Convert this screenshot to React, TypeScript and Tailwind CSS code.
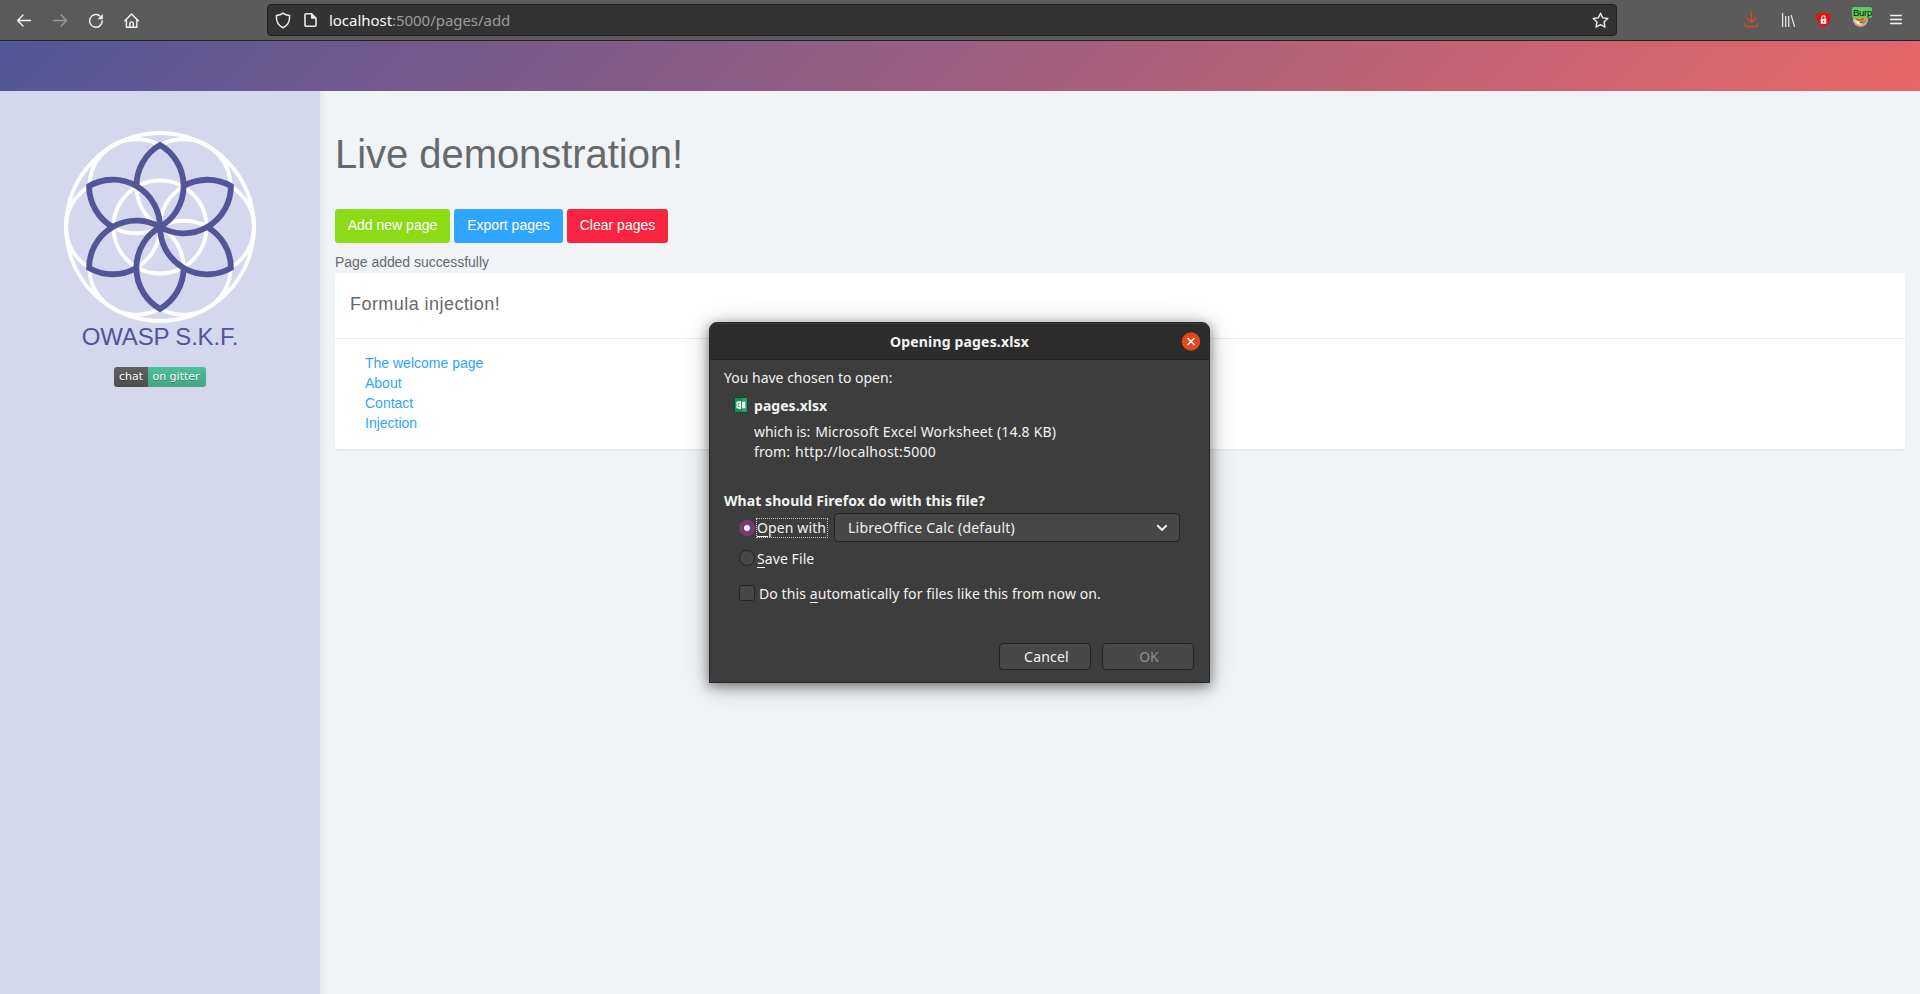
import type { ReactNode } from "react";

const PETALS = [0, 60, 120, 180, 240, 300];
const RINGS: [number, number][] = [
  [47, 0],
  [23.5, 40.7],
  [-23.5, 40.7],
  [-47, 0],
  [-23.5, -40.7],
  [23.5, -40.7],
];

function FlowerLogo() {
  return (
    <svg className="h-[192px] w-[192px]" viewBox="-96 -96 192 192" fill="none">
      <g stroke="#ffffff" strokeWidth="3.9">
        <circle r="94" />
        <circle r="46.500" />
        {RINGS.map(([x, y]) => (
          <circle key={`${x},${y}`} cx={x} cy={y} r="47" />
        ))}
      </g>
      <g stroke="#525596" strokeWidth="5.8" strokeMiterlimit="10">
        {PETALS.map((a) => (
          <path
            key={a}
            transform={`rotate(${a})`}
            d="M-23.6 -40.9A47.3 47.3 0 0 1 0 -81.9A47.3 47.3 0 0 1 0 0"
          />
        ))}
      </g>
    </svg>
  );
}

function Toolbar() {
  return (
    <header className="flex h-[41px] items-start border-b border-[#222222] bg-[#5b5b5b] font-['Noto_Sans',sans-serif]">
      <div className="flex w-[267px] items-center gap-[20px] pt-[13px] pl-[16px]">
        <svg className="size-4" viewBox="0 0 16 16" fill="none" stroke="#f3f3f3" strokeWidth="1.4" strokeLinecap="round" strokeLinejoin="round">
          <path d="M14.600 7.500H1.600M7 2.100L1.600 7.500l5.400 5.400" />
        </svg>
        <svg className="size-4" viewBox="0 0 16 16" fill="none" stroke="#9a9a9a" strokeWidth="1.4" strokeLinecap="round" strokeLinejoin="round">
          <path d="M1.500 7.500h13M9.100 2.100l5.400 5.400-5.400 5.400" />
        </svg>
        <svg className="size-4" viewBox="0 0 16 16" fill="none" stroke="#f3f3f3" strokeWidth="1.5" strokeLinecap="round">
          <path d="M11.600 2.800A6.300 6.300 0 1 0 14.200 8" />
          <path d="M14.800 1v5.200H9.600z" fill="#f3f3f3" stroke="none" />
        </svg>
        <svg className="size-4" viewBox="0 0 16 16" fill="none" stroke="#f3f3f3" strokeWidth="1.4" strokeLinecap="round" strokeLinejoin="round">
          <path d="M0.900 7.700L7.600 1l6.700 6.700M2.400 6.600v7.700h10.400V6.600M5.900 14.200v-3.600a1.700 1.700 0 0 1 3.400 0v3.600" />
        </svg>
      </div>
      <div className="mt-[4px] flex h-[32px] w-[1350px] items-center rounded-[4px] border border-[#202020] bg-[#333333] pl-[7px]">
        <svg className="mr-[13px] h-[17px] w-4" viewBox="0 0 16 17" fill="none" stroke="#ededed" strokeWidth="1.5" strokeLinejoin="round">
          <path d="M8 1.200C6.300 2.600 3.700 3.300 1.400 3.400C1.200 8.400 2.700 13.600 8 15.700C13.300 13.600 14.800 8.400 14.600 3.400C12.300 3.300 9.700 2.600 8 1.200z" />
        </svg>
        <svg className="mr-[12px] h-4 w-[13px]" viewBox="0 0 13 16" fill="none" stroke="#ededed" strokeWidth="1.6" strokeLinejoin="round">
          <path d="M7.600 1.800H2a1 1 0 0 0-1 1v10.400a1 1 0 0 0 1 1h9a1 1 0 0 0 1-1V6.200z" />
          <path d="M7.400 1.800v4.400h4.400z" fill="#ededed" strokeWidth="1" />
        </svg>
        <p className="flex-1 text-[15px] leading-5 tracking-[-0.04px] whitespace-pre text-[#9b9b9b]">
          <span className="text-[#f9f9fa]">localhost</span>:5000/pages/add
        </p>
        <svg className="mr-[7px] h-[17px] w-[17px]" viewBox="0 0 17 17" fill="none" stroke="#ededed" strokeWidth="1.4" strokeLinejoin="round">
          <path d="M8.500 1.200l2.200 4.700 5.100.6-3.800 3.500 1 5.100-4.500-2.500L4 15.100l1-5.100L1.200 6.500l5.100-.6z" />
        </svg>
      </div>
      <div className="flex flex-1 items-start pl-[127px]">
        <svg className="mt-[12px] h-4 w-[15px]" viewBox="0 0 15 16" fill="none" stroke="#d9491a" strokeWidth="1.4" strokeLinecap="round" strokeLinejoin="round">
          <path d="M7.400.8v9.400M3.200 6.200l4.200 4.200 4.200-4.200M1 11.600v1.600a1.300 1.300 0 0 0 1.300 1.300h10.200a1.300 1.300 0 0 0 1.300-1.300v-1.600" />
        </svg>
        <svg className="mt-[13px] ml-[22px] h-[15px] w-[15px]" viewBox="0 0 15 15" fill="none" stroke="#ededed" strokeWidth="1.2">
          <path d="M1.600 0v14M4.700 3v11M7.700 3v11M10.200 2.200l3.400 11.600" />
        </svg>
        <svg className="mt-[12px] ml-[20px] h-4 w-[15px]" viewBox="0 0 15 16">
          <path d="M7.500 0C5.200 1.400 2.800 1.900.5 2c-.4 6 1.600 11.200 7 13.600C12.900 13.200 14.900 8 14.500 2 12.200 1.900 9.800 1.400 7.500 0z" fill="#f20d0d" />
          <path d="M4.700 7h5.600v4.900H4.700z" fill="#fff" />
          <path d="M5.800 7.200V5.400a1.700 1.700 0 0 1 3.400 0v1.800" fill="none" stroke="#fff" strokeWidth="1.1" />
          <path d="M7.100 8.500h.8v1.900h-.8z" fill="#f20d0d" />
        </svg>
        <div className="relative mt-[7px] ml-[21px] h-[21px] w-[20px]">
          <svg className="absolute top-[4px] left-[1px] size-4" viewBox="0 0 16 16">
            <circle cx="7.500" cy="8" r="7.700" fill="#b9b5ae" />
            <path d="M1.500 6.500C1 11 4 14.300 7.500 14.300S14 11 13.500 6.500L11 5H4z" fill="#f0973a" />
            <path d="M1.200 9c1.300 4 5 5.600 8.300 4.500L6.500 10.500z" fill="#f4ead9" />
            <path d="M3.500 8.300l3.300 1 4-1.600M6.500 12l4-1.500" stroke="#7a4a1d" strokeWidth="1" fill="none" />
            <path d="M10.500 12.500L13.600 8" stroke="#5b88a8" strokeWidth="1" />
          </svg>
          <div className="absolute top-0 left-0 h-[11px] w-[20px] rounded-[2px] bg-[#5fc95f] pl-[1px] font-['Liberation_Sans',sans-serif] text-[9.5px] leading-[11px] tracking-[-0.3px] whitespace-pre text-[#111111]">
            Burp
          </div>
        </div>
        <svg className="mt-[14px] ml-[18px] h-[12px] w-[12px]" viewBox="0 0 12 12" stroke="#f3f3f3" strokeWidth="1.3" strokeLinecap="round">
          <path d="M.6 1.500h10.800M.6 5.500h10.800M.6 9.500h10.800" />
        </svg>
      </div>
    </header>
  );
}

function ActionButton({ className, children }: { className: string; children: ReactNode }) {
  return (
    <button className={`flex h-[34px] justify-center rounded-[3px] pt-[6px] text-[14px] leading-5 whitespace-nowrap text-white ${className}`}>
      {children}
    </button>
  );
}

function Sidebar() {
  return (
    <aside className="flex w-[320px] flex-col items-center bg-[#d5d7ee] pt-[40px]">
      <FlowerLogo />
      <h2 className="text-[24px] leading-[28px] tracking-[-0.2px] text-[#525596]">OWASP S.K.F.</h2>
      <div className="mt-[16px] flex h-[20px] overflow-hidden rounded-[3px] font-['DejaVu_Sans',sans-serif] text-[11px] leading-[20px] text-white [text-shadow:0_1px_0_rgba(1,1,1,0.3)]">
        <span className="w-[34px] bg-linear-to-b from-[#606060] to-[#4e4e4e] text-center">chat</span>
        <span className="w-[58px] bg-linear-to-b from-[#50be9b] to-[#40a685] pr-[2px] text-center">on gitter</span>
      </div>
    </aside>
  );
}

const LINKS = ["The welcome page", "About", "Contact", "Injection"];

function Content() {
  return (
    <main className="flex-1 bg-[#f0f4f7] bg-[linear-gradient(to_right,rgba(0,0,0,0.045),transparent_8px)] pt-[39px] pr-[15px] pl-[15px] text-[#66696c]">
      <h1 className="text-[40px] leading-[48px] tracking-[-0.05px]">Live demonstration!</h1>
      <div className="mt-[31px] flex gap-[4px]">
        <ActionButton className="w-[115px] bg-[#8bdb17]">Add new page</ActionButton>
        <ActionButton className="w-[109px] bg-[#30a5ff]">Export pages</ActionButton>
        <ActionButton className="w-[101px] bg-[#f9243f]">Clear pages</ActionButton>
      </div>
      <p className="mt-[9px] text-[14px] leading-5 tracking-[-0.04px]">Page added successfully</p>
      <section className="mt-px h-[176px] rounded-[4px] bg-white shadow-[0_1px_2px_rgba(0,0,0,0.08)]">
        <h3 className="h-[66px] border-b border-[#e9ecf2] pt-[18px] pl-[15px] text-[18px] leading-[26px] tracking-[0.45px]">
          Formula injection!
        </h3>
        <ul className="pt-[14px] pl-[30px] text-[14px] leading-5 text-[#30a5ff]">
          {LINKS.map((l) => (
            <li key={l}>{l}</li>
          ))}
        </ul>
      </section>
    </main>
  );
}

function Key({ children }: { children: ReactNode }) {
  return <span className="inline-block h-[19px] border-b border-white">{children}</span>;
}

function DownloadDialog() {
  return (
    <div className="absolute top-[322px] left-[709px] flex h-[361px] w-[501px] flex-col overflow-hidden rounded-t-[8px] border border-[#272727] bg-[#3d3d3d] font-['Noto_Sans',sans-serif] text-[14px] leading-5 whitespace-pre text-[#f3f3f2] shadow-[0_3px_12px_1px_rgba(0,0,0,0.4),0_4px_28px_rgba(0,0,0,0.2)]">
      <div className="flex h-[37px] items-center border-t border-b border-t-[#3a3a3a] border-b-[#222222] bg-[#2c2c2c]">
        <div className="w-[28px]" />
        <h2 className="flex-1 text-center font-bold tracking-[0.17px]">Opening pages.xlsx</h2>
        <svg className="mr-[8px] size-5" viewBox="0 0 20 20">
          <circle cx="10" cy="9.500" r="9.200" fill="#e2491a" />
          <path d="M6.500 6l7 7M13.500 6l-7 7" stroke="#fff" strokeWidth="1.500" />
        </svg>
      </div>
      <div className="flex flex-1 flex-col pt-[8px] pl-[14px]">
        <p>You have chosen to open:</p>
        <div className="mt-[8px] flex pl-[10px]">
          <svg className="mt-[1px] mr-[6px] h-4 w-[14px]" viewBox="0 0 14 16">
            <rect x=".5" y=".5" width="13" height="15" rx="1.500" fill="#169154" stroke="#0c4a2b" />
            <path d="M8 1h5v14H8z" fill="#22a565" />
            <path d="M2.500 4.700L7 4v8l-4.500-.7zM8 4.700h3.300v6.600H8z" fill="#fff" />
            <path d="M5.700 6.300H4.200v3.200h1.500" fill="none" stroke="#169154" strokeWidth=".8" />
          </svg>
          <p className="font-bold tracking-[0.04px]">pages.xlsx</p>
        </div>
        <p className="mt-[6px] pl-[30px] tracking-[0.19px]">
          <span className="tracking-[-0.02px]">which is:</span>
          <span className="ml-[5px]">Microsoft Excel Worksheet (14.8 KB)</span>
        </p>
        <p className="pl-[30px] tracking-[0.21px]">
          <span className="tracking-[0.08px]">from:</span>
          <span className="ml-[5px]">http://localhost:5000</span>
        </p>
        <p className="mt-[29px] font-bold tracking-[0.07px]">What should Firefox do with this file?</p>
        <div className="mt-[2px] flex h-[29px] items-center pl-[15px]">
          <span className="flex size-4 items-center justify-center rounded-full bg-[#763c71]">
            <span className="size-[6px] rounded-full bg-white" />
          </span>
          <span className="ml-px h-[20px] w-[72px] pl-px leading-[19px] tracking-[0.12px] outline-1 outline-offset-[-1px] outline-[#c8c8c8] outline-dotted">
            <Key>O</Key>pen with
          </span>
          <div className="ml-[6px] flex h-[29px] w-[346px] items-center rounded-[4px] border border-[#222222] bg-[#474747] pl-[13px]">
            <span className="flex-1 tracking-[0.23px]">LibreOffice Calc (default)</span>
            <svg className="mr-[11px] h-[8px] w-[12px]" viewBox="0 0 12 8" fill="none" stroke="#f3f3f3" strokeWidth="2">
              <path d="M1.300 1.200L6 5.900l4.700-4.700" />
            </svg>
          </div>
        </div>
        <div className="mt-[7px] flex pl-[15px]">
          <span className="mt-px size-4 rounded-full border border-[#242424] bg-[#474747]" />
          <span className="ml-[2px] tracking-[0.08px]">
            <Key>S</Key>ave File
          </span>
        </div>
        <div className="mt-[15px] flex pl-[15px]">
          <span className="mt-px size-4 rounded-[3px] border border-[#242424] bg-[#474747]" />
          <span className="ml-[4px] tracking-[0.09px]">
            Do this <Key>a</Key>utomatically for files like this from now on.
          </span>
        </div>
        <div className="mt-auto mr-[15px] mb-[12px] flex justify-end gap-[11px]">
          <button className="h-[27px] w-[92px] rounded-[4px] border border-[#222222] bg-[#474747] pl-[3px] tracking-[0.2px]">Cancel</button>
          <button className="h-[27px] w-[92px] rounded-[4px] border border-[#222222] bg-[#474747] pl-[2px] text-[#8e8e8e]">OK</button>
        </div>
      </div>
    </div>
  );
}

export default function App() {
  return (
    <div className="relative flex h-[994px] w-[1920px] flex-col overflow-hidden font-['Liberation_Sans',sans-serif]">
      <Toolbar />
      <div className="h-[50px] bg-linear-[135deg,#525698,#e86768]" />
      <div className="flex flex-1">
        <Sidebar />
        <Content />
      </div>
      <DownloadDialog />
    </div>
  );
}
